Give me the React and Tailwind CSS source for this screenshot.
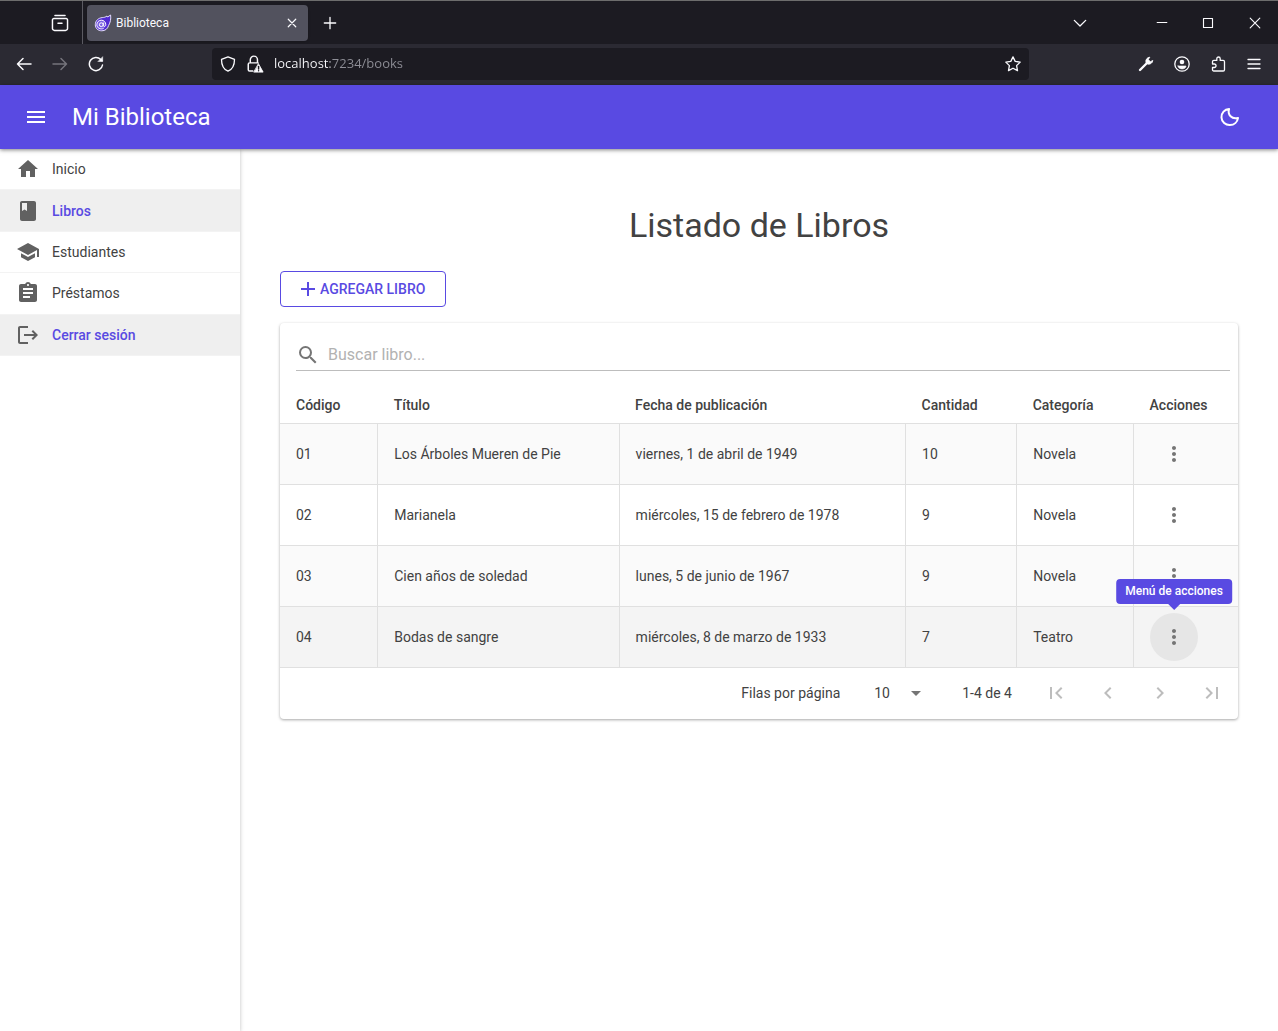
import { MdHome, MdClass, MdSchool, MdAssignment, MdLogout, MdMenu, MdAdd, MdSearch, MdMoreVert, MdFirstPage, MdChevronLeft, MdChevronRight, MdLastPage, MdArrowDropDown } from "react-icons/md";

const nav = [
  { label: "Inicio", icon: MdHome },
  { label: "Libros", icon: MdClass, active: true },
  { label: "Estudiantes", icon: MdSchool },
  { label: "Préstamos", icon: MdAssignment },
  { label: "Cerrar sesión", icon: MdLogout, active: true },
];

const books = [
  ["01", "Los Árboles Mueren de Pie", "viernes, 1 de abril de 1949", "10", "Novela"],
  ["02", "Marianela", "miércoles, 15 de febrero de 1978", "9", "Novela"],
  ["03", "Cien años de soledad", "lunes, 5 de junio de 1967", "9", "Novela"],
  ["04", "Bodas de sangre", "miércoles, 8 de marzo de 1933", "7", "Teatro"],
];

const rowColors = ["bg-[#fafafa]", "bg-white", "bg-[#fafafa]", "bg-[#f4f4f4]"];

function Line({ children, size = 16, width = 1.3, className = "" }) {
  return (
    <svg width={size} height={size} viewBox="0 0 16 16" fill="none" stroke="currentColor" strokeWidth={width} strokeLinecap="round" strokeLinejoin="round" className={className} aria-hidden="true">
      {children}
    </svg>
  );
}

function BlazorLogo() {
  return (
    <svg width="18" height="18" viewBox="0 0 18 18" fill="none" aria-hidden="true">
      <path d="M1.300 10.800C1.300 6.500 4.500 4 8.200 3.600c2-.2 3.300-.4 4.800-1.600l.6 1L16.600 1c.5 4-.2 7.500-2 10.500-1 3.500-3.500 5.300-6.800 5.300-3.800 0-6.500-2.500-6.500-6Z" fill="#512bd4" stroke="#e4defc" strokeWidth="1" />
      <circle cx="7.300" cy="10.600" r="4.500" fill="#7b61e4" />
      <path d="M9.300 8.600v2.700c0 1.700 2.500 1.500 2.500-.6 0-2.700-2-4.500-4.500-4.500s-4.500 1.900-4.500 4.500c0 3.500 3.800 5.200 6.800 3.700" stroke="#fff" strokeWidth="1" />
      <circle cx="7.300" cy="10.700" r="1.900" stroke="#fff" strokeWidth="1" />
    </svg>
  );
}

function TabBar() {
  return (
    <div className="flex h-11 items-center border-t border-[#6d6d6d] bg-[#1c1b22] text-[#fbfbfe]">
      <div className="flex h-full w-[83px] shrink-0 items-center justify-end border-r border-[#5b5a62] pr-[13px]">
        <button aria-label="Vista de Firefox">
          <Line size={18}><path d="M3.500 1.300h9M2.500 4h11a1.200 1.200 0 0 1 1.200 1.200v7.600a1.800 1.800 0 0 1-1.800 1.800H3.100a1.800 1.800 0 0 1-1.800-1.800V5.200A1.200 1.200 0 0 1 2.500 4ZM6.200 8.300h3.600" /></Line>
        </button>
      </div>
      <div className="ml-1 flex h-9 w-[221px] shrink-0 items-center rounded bg-[#52525e] pr-2.5 pl-[7px] shadow">
        <BlazorLogo />
        <span className="ml-1 flex-1 text-xs">Biblioteca</span>
        <button aria-label="Cerrar pestaña"><Line size={12} width={1.6}><path d="m3 3 10 10M13 3 3 13" /></Line></button>
      </div>
      <button aria-label="Nueva pestaña" className="ml-[15px]"><Line size={14} width={1.5}><path d="M8 1.500v13M1.500 8h13" /></Line></button>
      <div className="flex-1" />
      <button aria-label="Listar pestañas" className="mr-[69px]"><Line size={14} width={1.5}><path d="m1.500 5 6.500 6.500L14.500 5" /></Line></button>
      <div className="mr-4 flex items-center gap-[34px]">
        <button aria-label="Minimizar"><Line size={12} width={1.4}><path d="M1.500 7.300h13" /></Line></button>
        <button aria-label="Maximizar"><Line size={12} width={1.5}><path d="M2 2h12v12H2z" /></Line></button>
        <button aria-label="Cerrar"><Line size={14} width={1.3}><path d="m2.500 2.500 11 11M13.500 2.500l-11 11" /></Line></button>
      </div>
    </div>
  );
}

function AddressBar() {
  return (
    <div className="flex h-[41px] items-center bg-[#2b2a33] pb-px text-[#fbfbfe]">
      <div className="flex w-[212px] shrink-0 items-center gap-5 pl-4">
        <button aria-label="Atrás"><Line width={1.5}><path d="M15 8H1.500M7 2.500 1.500 8 7 13.500" /></Line></button>
        <button aria-label="Adelante" className="text-[#75747c]"><Line width={1.5}><path d="M1 8h13.500M9 2.500 14.500 8 9 13.500" /></Line></button>
        <button aria-label="Recargar"><Line width={1.5}><path d="M14.500 9A6.600 6.600 0 1 1 12.800 3.500L14 4.700" /><path d="M14.700 1v4.500h-4.500z" fill="currentColor" strokeWidth=".5" /></Line></button>
      </div>
      <div className="flex h-8 flex-1 items-center rounded bg-[#1c1b22] px-2">
        <Line><path d="M8 .8 14.500 3.400c0 5-1.500 9.600-6.500 11.800C3 13 1.500 8.400 1.500 3.400Z" /></Line>
        <Line size={18} className="ml-2.5">
          <path d="M6 14.200H3.200A1.200 1.200 0 0 1 2 13V8.200A1.200 1.200 0 0 1 3.200 7h7.600M3.800 7V4.200a3.200 3.200 0 0 1 6.400 0V7" />
          <path d="m11.200 8 4 7.200h-8Z" fill="currentColor" strokeWidth=".8" />
          <path d="M11.200 10.200v2.200M11.200 13.900v.1" stroke="#1c1b22" />
        </Line>
        <input
          type="text"
          aria-label="Dirección"
          defaultValue="localhost:7234/books"
          className="ml-2.5 min-w-0 flex-1 bg-[linear-gradient(to_right,#fbfbfe_56px,#8f8f97_56px)] bg-clip-text font-['Open_Sans',sans-serif] text-[13px] text-transparent outline-none"
        />
        <button aria-label="Marcar"><Line><path d="m8 .9 2.200 4.500 5 .7-3.600 3.500.9 5L8 12.200l-4.500 2.400.9-5L.8 6.100l5-.7Z" /></Line></button>
      </div>
      <div className="ml-[109px] flex items-center gap-5 pr-4">
        <button aria-label="Herramientas"><Line><path d="M2 14 9 7" strokeWidth="2.4" /><path d="M11.500 1.200a4 4 0 0 0-3.400 5.500l1.200 1.200a4 4 0 0 0 5.500-3.500l-2.400 1.300-1.900-1.900Z" fill="currentColor" strokeWidth=".8" /></Line></button>
        <button aria-label="Cuenta"><Line><circle cx="8" cy="8" r="7.200" /><circle cx="8" cy="6" r="2.300" fill="currentColor" stroke="none" /><path d="M4 10h8c0 4-8 4-8 0Z" fill="currentColor" strokeWidth=".6" /></Line></button>
        <button aria-label="Extensiones"><Line><path d="M2.500 8V5.700c0-.8.500-1.300 1.300-1.300h3V2.700a1.700 1.700 0 0 1 3.400 0v1.700h3c.8 0 1.300.5 1.300 1.300v8c0 .8-.5 1.300-1.300 1.300H3.800c-.8 0-1.300-.5-1.300-1.300v-2.200h1.800a1.700 1.700 0 0 0 0-3.500Z" /></Line></button>
        <button aria-label="Menú de Firefox"><Line width={1.3}><path d="M2 3.500h12M2 8h12M2 12.500h12" /></Line></button>
      </div>
    </div>
  );
}

function Sidebar() {
  return (
    <nav className="z-10 w-60 shrink-0 bg-white shadow-[0_1px_4px_rgba(0,0,0,0.25)]">
      <ul className="grid h-[207px] grid-rows-5">
        {nav.map(({ label, icon: Icon, active }) => (
          <li key={label} className={active ? "border-b border-[#f3f3f3] bg-[#efefef] font-medium text-[#594ae2]" : "border-b border-[#f3f3f3] text-[#424242]"}>
            <a href="#" className="flex h-full items-center px-4 text-sm">
              <Icon size={24} className="mr-3 text-[#616161]" />
              {label}
            </a>
          </li>
        ))}
      </ul>
    </nav>
  );
}

function BooksTable() {
  return (
    <table className="w-full table-fixed border-collapse text-left text-sm">
      <colgroup>
        <col className="w-[10.2%]" />
        <col className="w-[25.2%]" />
        <col className="w-[29.9%]" />
        <col className="w-[11.6%]" />
        <col className="w-[12.2%]" />
        <col />
      </colgroup>
      <thead>
        <tr className="h-9 border-b border-[#e0e0e0]">
          {["Código", "Título", "Fecha de publicación", "Cantidad", "Categoría", "Acciones"].map((h) => (
            <th key={h} className="px-4 font-medium">{h}</th>
          ))}
        </tr>
      </thead>
      <tbody>
        {books.map((book, i) => (
          <tr key={book[0]} className={`h-[61px] border-b border-[#e0e0e0] ${rowColors[i]}`}>
            {book.map((value, j) => (
              <td key={j} className="border-r border-[#e0e0e0] px-4">{value}</td>
            ))}
            <td className="px-4">
              <div className="relative w-12">
                <button aria-label="Menú de acciones" className={`flex size-12 items-center justify-center rounded-full text-[#757575] ${i === 3 ? "bg-[#e6e6e6]" : ""}`}>
                  <MdMoreVert size={24} />
                </button>
                {i === 3 && (
                  <div role="tooltip" className="absolute bottom-full left-1/2 mb-[9px] -translate-x-1/2 rounded bg-[#594ae2] px-[9px] py-1 text-xs leading-[17px] font-medium whitespace-nowrap text-white">
                    Menú de acciones
                    <span className="absolute top-full left-1/2 -translate-x-1/2 border-x-6 border-t-6 border-x-transparent border-t-[#594ae2]" />
                  </div>
                )}
              </div>
            </td>
          </tr>
        ))}
      </tbody>
    </table>
  );
}

const pagerButtons = [
  ["Primera página", MdFirstPage],
  ["Página anterior", MdChevronLeft],
  ["Página siguiente", MdChevronRight],
  ["Última página", MdLastPage],
];

function Pager() {
  return (
    <div className="flex h-[51px] items-center justify-end pr-0.5 text-sm">
      <label htmlFor="rows">Filas por página</label>
      <div className="relative ml-8 flex items-center">
        <select id="rows" defaultValue="10" className="w-14 appearance-none bg-transparent pl-0.5">
          <option>10</option>
          <option>25</option>
          <option>50</option>
        </select>
        <MdArrowDropDown size={24} className="pointer-events-none absolute right-0 text-[#757575]" />
      </div>
      <span className="ml-[34px]">1-4 de 4</span>
      <div className="ml-5 flex gap-1">
        {pagerButtons.map(([label, Icon]) => (
          <button key={label} disabled aria-label={label} className="flex size-12 items-center justify-center text-[#bdbdbd]">
            <Icon size={24} />
          </button>
        ))}
      </div>
    </div>
  );
}

export default function App() {
  return (
    <div className="flex min-h-screen flex-col bg-white font-[Roboto,sans-serif] text-[#424242]">
      <TabBar />
      <AddressBar />
      <header className="z-20 flex h-16 items-center bg-[#594ae2] px-6 text-white shadow-[0_1px_4px_rgba(0,0,0,0.5)]">
        <button aria-label="Abrir menú"><MdMenu size={24} /></button>
        <span className="ml-6 flex-1 text-2xl">Mi Biblioteca</span>
        <button aria-label="Modo oscuro" className="mr-3 flex size-6 items-center justify-center">
          <svg width="22" height="22" viewBox="0 0 24 24" fill="none" stroke="currentColor" strokeWidth="2.200" strokeLinejoin="round" aria-hidden="true">
            <path d="M11 3.200C9 9.500 14 15 20.800 13 20 17.500 16.500 20.800 12 20.800A8.800 8.800 0 0 1 11 3.200Z" />
          </svg>
        </button>
      </header>
      <div className="flex flex-1">
        <Sidebar />
        <main className="flex-1 px-10 pt-[52px]">
          <h1 className="text-center text-[34px] leading-[48px]">Listado de Libros</h1>
          <button className="mt-[22px] flex h-9 items-center rounded border border-[#594ae2] pr-5 pl-[15px] text-sm font-medium text-[#594ae2] uppercase">
            <MdAdd size={24} />
            Agregar libro
          </button>
          <section className="mt-4 rounded bg-white shadow-[0_1px_3px_rgba(0,0,0,0.35)]">
            <div className="flex h-16 items-center pr-2 pl-4">
              <label className="flex h-8 flex-1 items-center border-b border-[#bdbdbd]">
                <MdSearch size={24} className="mr-2 text-[#757575]" />
                <input type="text" aria-label="Buscar libro" placeholder="Buscar libro..." className="flex-1 text-base outline-none placeholder:text-[#b2b2b2]" />
              </label>
            </div>
            <BooksTable />
            <Pager />
          </section>
        </main>
      </div>
    </div>
  );
}
